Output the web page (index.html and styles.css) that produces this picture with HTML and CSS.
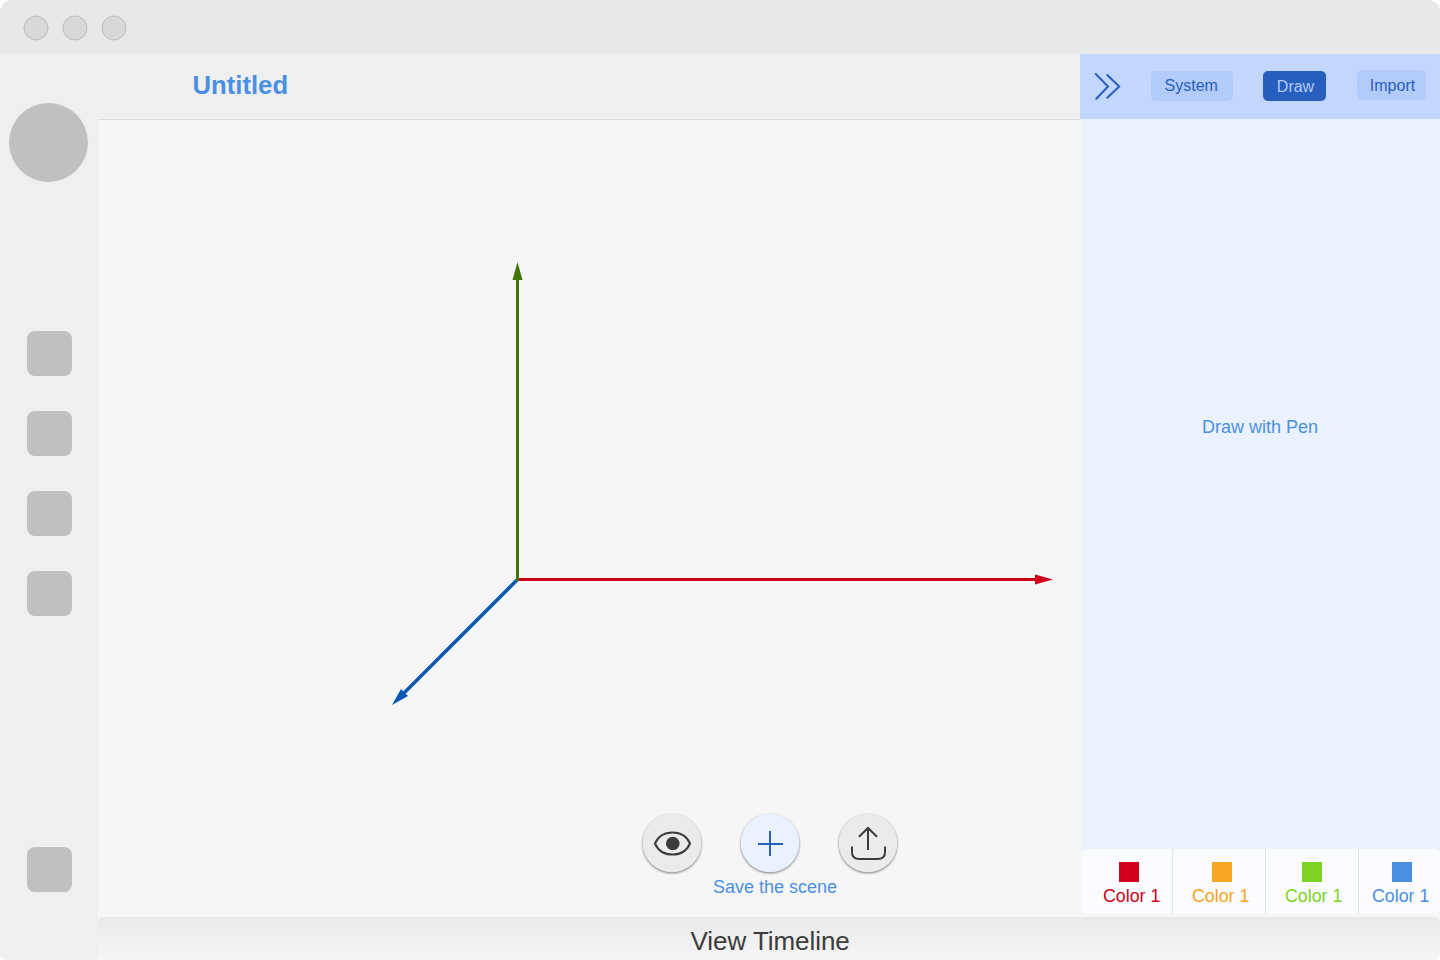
FILE: index.html
```html
<!DOCTYPE html>
<html lang="en">
<head>
<meta charset="utf-8">
<title>Untitled</title>
<link rel="stylesheet" href="styles.css">
</head>
<body>
<div class="window">
  <header class="titlebar">
    <svg width="104" height="26" viewBox="23 15 104 26" fill="#d8d8d8" stroke="#bcbcbc"><circle cx="36" cy="28" r="12"/><circle cx="75" cy="28" r="12"/><circle cx="114" cy="28" r="12"/></svg>
  </header>
  <div class="body">
    <nav class="sidebar">
      <div class="avatar"></div>
      <div class="tools"><div class="tool"></div><div class="tool"></div><div class="tool"></div><div class="tool"></div></div>
      <div class="tool"></div>
    </nav>
    <div class="workspace">
      <div class="upper">
        <main class="stage">
          <h1 class="doc-title">Untitled</h1>
          <div class="canvas">
            <svg class="axes" width="982" height="797" viewBox="98 120 982 797">
              <path d="M517.5 579.5H1036" stroke="#d0021b" stroke-width="3"/>
              <path d="M1053 579.5L1035 574.5V584.5Z" fill="#d0021b"/>
              <path d="M517.5 579.5L404 693" stroke="#0556b5" stroke-width="3.4"/>
              <path d="M392 705L401 689L403.5 691.5L408 696Z" fill="#0556b5"/>
              <path d="M517.5 581V279" stroke="#417505" stroke-width="3"/>
              <path d="M517.5 262L522.5 280H512.5Z" fill="#417505"/>
            </svg>
            <div class="actions">
              <div class="buttons">
                <button class="round"><svg width="60" height="60" viewBox="0 0 60 60"><circle class="disc" cx="30" cy="30" r="29.3"/><path d="M13 30.5C16 23.5 22 19.5 30.5 19.5S45 23.5 48 30.5C45 37.5 39 41.5 30.5 41.5S16 37.5 13 30.5Z" fill="none" stroke="#3c3c3c" stroke-width="2"/><circle cx="30.8" cy="30.5" r="6.8" fill="#3c3c3c"/></svg></button>
                <button class="round add"><svg width="60" height="60" viewBox="0 0 60 60"><circle class="disc" cx="30" cy="30" r="29.3"/><path d="M30 18V43M18 31H43" fill="none" stroke="#275fbf" stroke-width="2"/></svg></button>
                <button class="round"><svg width="60" height="60" viewBox="0 0 60 60"><circle class="disc" cx="30" cy="30" r="29.3"/><path d="M30 37V15.2M21 23.8L30 15L39 23.8M14 33.5V39Q14 46 21.5 46H39.5Q47 46 47 39V33.5" fill="none" stroke="#3c3c3c" stroke-width="2"/></svg></button>
              </div>
              <div class="caption">Save the scene</div>
            </div>
          </div>
        </main>
        <aside class="panel">
          <div class="tabs">
            <svg class="chevrons" width="28" height="30" viewBox="0 0 28 30"><path d="M2.8 3L15 15.5L3.3 27.8M14.3 4L26.2 15.5L14.3 26.8" fill="none" stroke="#275fbf" stroke-width="2" stroke-linecap="round"/></svg>
            <button class="tab system">System</button>
            <button class="tab draw">Draw</button>
            <button class="tab import">Import</button>
          </div>
          <div class="pen">Draw with Pen</div>
          <div class="palette">
            <div class="color red"><i class="swatch"></i><span>Color 1</span></div>
            <div class="color orange"><i class="swatch"></i><span>Color 1</span></div>
            <div class="color green"><i class="swatch"></i><span>Color 1</span></div>
            <div class="color blue"><i class="swatch"></i><span>Color 1</span></div>
          </div>
        </aside>
      </div>
      <footer class="timeline">View Timeline</footer>
    </div>
  </div>
</div>
</body>
</html>
```
FILE: styles.css
```css
* { box-sizing: border-box; }
body { margin: 0; background: #fff; font-family: "Liberation Sans", Arial, sans-serif; }
button { border: 0; padding: 0; font: inherit; }
svg { display: block; }
.window { width: 1440px; height: 960px; display: flex; flex-direction: column; overflow: hidden; border-radius: 12px 12px 6px 6px; background: #f6f6f6; }
.titlebar { height: 54px; flex: none; padding: 15px 0 0 23px; background: #e8e8e8; }
.body { flex: 1; display: flex; min-height: 0; }
.sidebar { width: 98px; flex: none; display: flex; flex-direction: column; align-items: center; padding: 49px 0 68px; background: #efefef; border-radius: 0 0 6px 6px; }
.avatar { width: 79px; height: 79px; margin-right: 1px; border-radius: 50%; background: #c0c0c0; }
.tools { display: flex; flex-direction: column; gap: 35px; margin: 149px 0 auto; }
.tool { width: 45px; height: 45px; margin-left: 1px; flex: none; border-radius: 8px; background: #c0c0c0; }
.workspace { flex: 1; display: flex; flex-direction: column; min-width: 0; }
.upper { height: 863px; flex: none; display: flex; }
.stage { width: 982px; display: flex; flex-direction: column; }
.doc-title { height: 66px; flex: none; margin: 0; padding-left: 94.5px; border-bottom: 1px solid #dadada; background: #efefef; color: #4a90e2; font-size: 25.7px; line-height: 63px; }
.canvas { height: 797px; display: grid; }
.axes { grid-area: 1 / 1; }
.actions { grid-area: 1 / 1; align-self: end; padding: 0 0 17px 544px; }
.buttons { display: flex; gap: 38px; margin-bottom: 1px; }
.round { width: 60px; height: 60px; background: none; }
.round svg { overflow: visible; }
.disc { fill: #ebebeb; filter: drop-shadow(0 1px 1px rgba(0, 0, 0, 0.5)); }
.add .disc { fill: #eaf1ff; }
.caption { padding-left: 71px; color: #4a90e2; font-size: 18px; line-height: 26px; }
.panel { width: 360px; display: flex; flex-direction: column; }
.tabs { height: 65px; flex: none; display: flex; align-items: flex-start; padding-left: 13px; background: #c2d6ff; }
.chevrons { margin-top: 17px; }
.tab { height: 30px; border-radius: 5px; background: #b3cbf9; color: #275fbf; font-size: 16px; line-height: 30px; text-align: center; }
.system { width: 82px; margin: 17px 0 0 29.5px; padding-right: 0.5px; }
.draw { width: 63px; margin: 17.4px 0 0 30.5px; padding-left: 2px; line-height: 31px; background: #275fbf; color: #b3cbf9; }
.import { width: 69px; margin: 16px 0 0 31px; padding-left: 2px; line-height: 32px; }
.pen { flex: 1; margin-left: 1px; padding: 295px 1px 0 0; background: #eaf1ff; color: #4a90e2; font-size: 18px; line-height: 26px; text-align: center; }
.palette { height: 65px; flex: none; display: flex; margin: 0 0 3px 1px; background: linear-gradient(#eaf1ff 50%, #f6f6f6 50%); }
.color { padding: 13px 0 0; background: #fbfcff; font-size: 17.8px; line-height: 20px; white-space: nowrap; }
.color + .color { border-left: 1px solid #e1e4e8; }
.swatch { display: block; width: 20px; height: 20px; margin-bottom: 4px; background: currentColor; }
.red { width: 91px; padding-left: 22px; border-radius: 6px 0 0 6px; color: #d0021b; }
.red .swatch { margin-left: 16px; }
.orange { width: 93px; padding-left: 19px; color: #f5a623; }
.orange .swatch { margin-left: 20px; }
.green { width: 93px; padding-left: 19px; color: #7ed321; }
.green .swatch { margin-left: 17px; }
.blue { width: 82px; padding-left: 13px; border-radius: 0 6px 6px 0; color: #4a90e2; }
.blue .swatch { margin-left: 20px; }
.timeline { flex: 1; padding-left: 592.5px; border-radius: 6px 6px 0 0; background: linear-gradient(#e9e9e9, #f7f7f7); color: #3c3c3c; font-size: 26px; letter-spacing: -0.05px; line-height: 48px; }
```
